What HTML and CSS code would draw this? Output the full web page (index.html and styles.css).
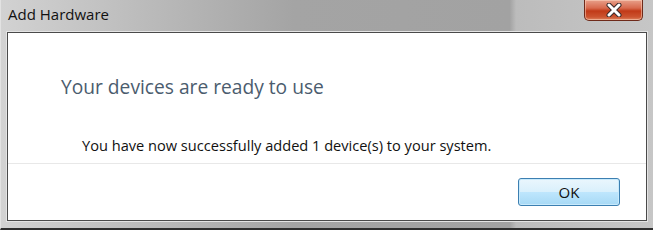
FILE: index.html
```html
<!DOCTYPE html>
<html>
<head>
<meta charset="utf-8">
<link rel="stylesheet" href="styles.css">
</head>
<body>
<div class="window">
  <div class="titlebar">
    <span class="title">Add Hardware</span>
    <div class="close">
      <svg width="20" height="14" viewBox="0 0 20 14">
        <path d="M5 2 L15 12 M15 2 L5 12" stroke="#3a2a2a" stroke-width="5" stroke-linecap="round" fill="none"/>
        <path d="M5 2 L15 12 M15 2 L5 12" stroke="#ffffff" stroke-width="3" stroke-linecap="round" fill="none"/>
      </svg>
    </div>
  </div>
  <div class="frame">
    <div class="client">
      <div class="content">
        <h1 class="heading">Your devices are ready to use</h1>
        <p class="message">You have now successfully added 1 device(s) to your system.</p>
      </div>
      <div class="footer">
        <button class="ok">OK</button>
      </div>
    </div>
  </div>
</div>
</body>
</html>
```

FILE: styles.css
```css
html, body {
  margin: 0;
  padding: 0;
  background: #ffffff;
  width: 653px;
  height: 233px;
  overflow: hidden;
}

.window {
  width: 653px;
  height: 230px;
  box-sizing: border-box;
  border-bottom: 2px solid #2e2e2e;
  border-left: 1px solid #e2e2e2;
  background: linear-gradient(to right, #d2d2d2 0%, #b8b8b8 25%, #a4a4a4 45%, #a2a2a2 78%, #bcbcbc 79%, #c6c6c6 100%);
  display: flex;
  flex-direction: column;
  font-family: "Open Sans", "Noto Sans", sans-serif;
}

.titlebar {
  height: 32px;
  display: flex;
  align-items: flex-start;
  flex-shrink: 0;
}

.title {
  font-size: 15px;
  color: #111;
  margin-left: 7px;
  margin-top: 4px;
  line-height: 20px;
}

.close {
  margin-left: auto;
  margin-right: 10px;
  width: 59px;
  height: 21px;
  box-sizing: border-box;
  border: 1px solid #6e2a1a;
  border-top: none;
  border-radius: 0 0 5px 5px;
  background: linear-gradient(to bottom, #e8a08a 0%, #d86a4e 40%, #c13a18 55%, #cc5430 85%, #de8460 100%);
  box-shadow: inset 0 0 0 1px rgba(255, 220, 200, 0.5);
  display: flex;
  align-items: center;
  justify-content: center;
}

.frame {
  flex: 1;
  padding: 0 6px 7px 6px;
  display: flex;
}

.client {
  flex: 1;
  background: #ffffff;
  border: 1px solid #4a4a4a;
  box-shadow: 0 0 0 1px #e4e4e4;
  display: flex;
  flex-direction: column;
}

.content {
  height: 131px;
  padding-left: 53px;
  box-sizing: border-box;
  border-bottom: 1px solid #e8e8e8;
}

.heading {
  margin: 41px 0 0 0;
  font-weight: normal;
  font-size: 19.2px;
  line-height: 26px;
  color: #4b5c6e;
}

.message {
  margin: 35px 0 0 21px;
  font-size: 14.6px;
  line-height: 20px;
  color: #111;
}

.footer {
  flex: 1;
  display: flex;
  justify-content: flex-end;
  align-items: flex-start;
  padding: 14px 26px 0 0;
}

.ok {
  width: 102px;
  height: 28px;
  box-sizing: border-box;
  border: 1px solid #3c7fb1;
  border-radius: 3px;
  background: linear-gradient(to bottom, #eaf6fd 0%, #d9f0fc 50%, #bee6fd 51%, #a7d9f5 100%);
  box-shadow: inset 0 0 0 1px #c8eafc;
  font-family: "Open Sans", "Noto Sans", sans-serif;
  font-size: 15px;
  color: #111;
  padding: 0;
}
```
